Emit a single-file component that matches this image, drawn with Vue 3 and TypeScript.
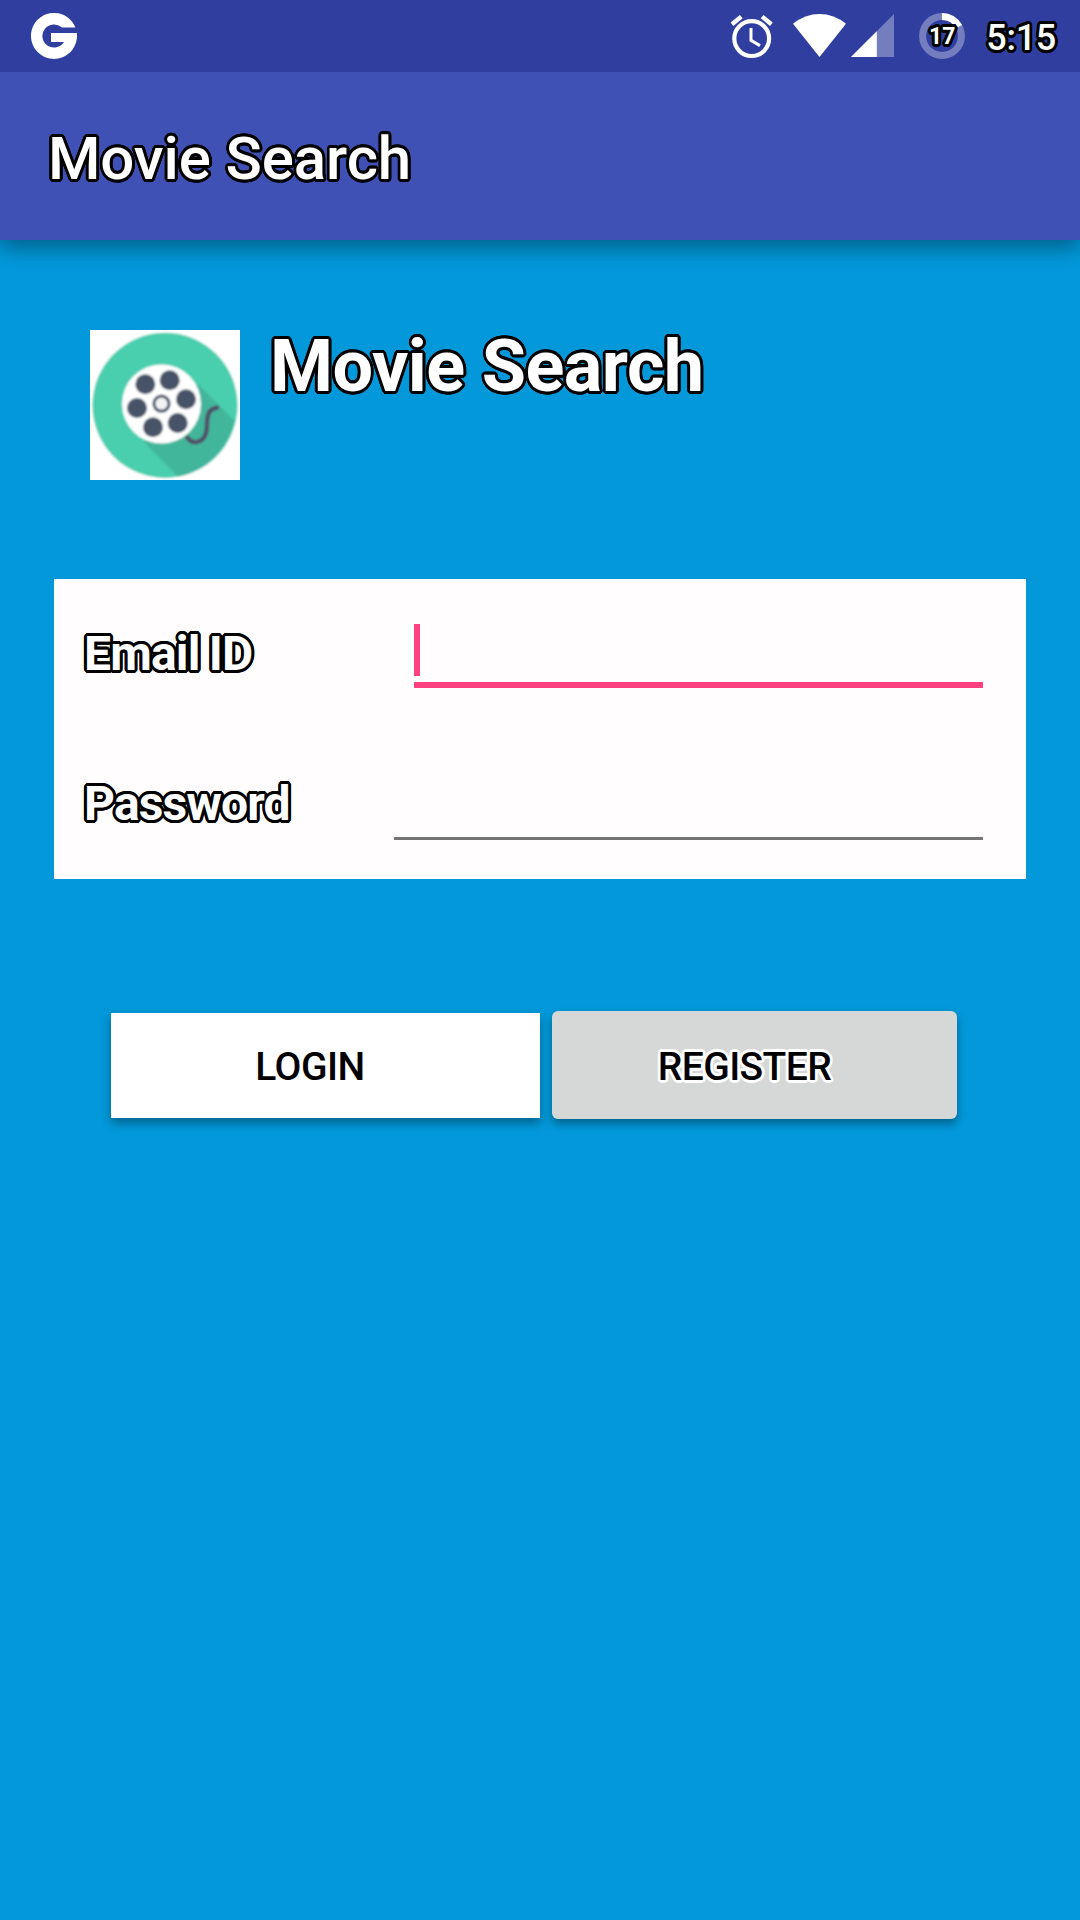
<script setup lang="ts">
import { ref } from 'vue'

interface Field {
  id: string
  label: string
  type: string
  active: boolean
}

const appName = 'Movie Search'
const battery = 17
const clock = '5:15'

const fields = ref<Field[]>([
  { id: 'email', label: 'Email ID', type: 'text', active: true },
  { id: 'password', label: 'Password', type: 'password', active: false },
])

const holes: [number, number][] = [
  [55.3, 54.3],
  [79.7, 50.3],
  [96, 69.3],
  [87.7, 93],
  [63, 97.3],
  [47, 78],
]
</script>

<template>
  <div class="screen">
    <header class="status">
      <svg class="google" width="46" height="46" viewBox="31 13 46 46">
        <path d="M75.4 27.5A23 23 0 1 0 76.8 33H51V42H63.9A11.6 11.6 0 1 1 61.9 27.5Z" fill="#fff" />
      </svg>
      <div class="tray">
        <svg class="alarm" width="44" height="46" viewBox="730 13 44 46">
          <circle cx="751.7" cy="38.6" r="17.4" fill="none" stroke="#fff" stroke-width="4.2" />
          <path d="M732 24.2L741.3 16.6M771.4 24.2L762.1 16.6" stroke="#fff" stroke-width="4.4" fill="none" />
          <path d="M751 28V40.3L760 45.6" fill="none" stroke="#fff" stroke-width="3" />
        </svg>
        <svg class="wifi" width="54" height="46" viewBox="793 13 54 46">
          <path d="M819.5 57L793 23.8Q805 14 819.5 14T846 23.8Z" fill="#fff" />
        </svg>
        <svg class="cell" width="43" height="46" viewBox="851 13 43 46">
          <path d="M894 14V57H851Z" fill="#fff" fill-opacity=".33" />
          <path d="M876.8 31.2V57H851Z" fill="#fff" />
        </svg>
        <div class="battery">
          <svg width="46" height="46" viewBox="0 0 46 46">
            <circle cx="23" cy="23" r="19.4" fill="none" stroke="#fff" stroke-opacity=".33" stroke-width="7" />
            <circle
              cx="23" cy="23" r="19.4" fill="none" stroke="#fff" stroke-width="7"
              pathLength="100" :stroke-dasharray="`${battery} 100`" transform="rotate(-90 23 23)"
            />
          </svg>
          <span class="level outlined">{{ battery }}</span>
        </div>
        <span class="clock outlined">{{ clock }}</span>
      </div>
    </header>

    <div class="appbar">
      <h1 class="title outlined">{{ appName }}</h1>
    </div>

    <main class="content">
      <section class="brand">
        <svg class="logo" width="150" height="150" viewBox="0 0 150 150">
          <defs>
            <filter id="soften" x="0" y="0" width="1" height="1">
              <feGaussianBlur stdDeviation=".8" />
            </filter>
          </defs>
          <rect width="150" height="150" fill="#fff" />
          <g filter="url(#soften)">
            <rect width="150" height="150" fill="#fff" />
            <circle cx="75" cy="75.3" r="72.6" fill="#4acfae" />
            <path d="M108 54L144.5 91A72.6 72.6 0 0 1 88 146.7L54 112Z" fill="#42b69b" />
            <circle cx="71.5" cy="74" r="39.5" fill="#fff" />
            <circle v-for="([x, y], i) in holes" :key="i" :cx="x" :cy="y" r="10" fill="#465266" />
            <circle cx="71.5" cy="73.7" r="7.6" fill="#f2f2f2" stroke="#465266" stroke-width="3" />
            <path
              d="M96.5 106C99 111 103 112.6 107 112C115 110.5 117 102 117 94C117 83 120 78 129 77.5"
              fill="none" stroke="#4f5068" stroke-width="4.4"
            />
          </g>
        </svg>
        <h2 class="name outlined">{{ appName }}</h2>
      </section>

      <form class="card" @submit.prevent>
        <div v-for="field in fields" :key="field.id" class="field">
          <label class="label outlined" :for="field.id">{{ field.label }}</label>
          <div class="entry" :class="{ active: field.active }">
            <span v-if="field.active" class="caret"></span>
            <input :id="field.id" class="input" :type="field.type" />
          </div>
        </div>
      </form>

      <div class="actions">
        <button class="btn login" type="button">LOGIN</button>
        <button class="btn register outlined" type="button">REGISTER</button>
      </div>
    </main>
  </div>
</template>

<style>
body {
  background: #0298d9;
}
</style>

<style scoped>
.screen {
  width: 1080px;
  height: 1920px;
  display: flex;
  flex-direction: column;
  overflow: hidden;
  background: #0298d9;
  font-family: Roboto, sans-serif;
}

h1,
h2 {
  margin: 0;
}

.outlined {
  --o: #000;
  --r: 2.9px;
  --d: calc(var(--r) * 0.707);
  --a: calc(var(--r) * 0.924);
  --b: calc(var(--r) * 0.383);
  color: #fff;
  white-space: nowrap;
  text-shadow:
    var(--r) 0 var(--o),
    var(--a) var(--b) var(--o),
    var(--d) var(--d) var(--o),
    var(--b) var(--a) var(--o),
    0 var(--r) var(--o),
    calc(var(--b) * -1) var(--a) var(--o),
    calc(var(--d) * -1) var(--d) var(--o),
    calc(var(--a) * -1) var(--b) var(--o),
    calc(var(--r) * -1) 0 var(--o),
    calc(var(--a) * -1) calc(var(--b) * -1) var(--o),
    calc(var(--d) * -1) calc(var(--d) * -1) var(--o),
    calc(var(--b) * -1) calc(var(--a) * -1) var(--o),
    0 calc(var(--r) * -1) var(--o),
    var(--b) calc(var(--a) * -1) var(--o),
    var(--d) calc(var(--d) * -1) var(--o),
    var(--a) calc(var(--b) * -1) var(--o);
}

.status {
  position: relative;
  z-index: 1;
  height: 72px;
  flex: none;
  display: flex;
  box-sizing: border-box;
  align-items: center;
  justify-content: space-between;
  padding: 0 24px 0 31px;
  background: #303f9f;
}

.tray {
  display: flex;
  align-items: center;
}

.tray svg,
.google {
  display: block;
  overflow: visible;
}

.wifi {
  margin-left: 19px;
}

.cell {
  margin-left: 4px;
}

.battery {
  position: relative;
  margin-left: 25px;
}

.level {
  position: absolute;
  inset: 0;
  text-align: center;
  font-size: 23px;
  line-height: 48px;
  font-weight: 700;
}

.clock {
  margin-left: 21px;
  font-size: 36px;
  line-height: 46px;
  font-weight: 500;
  letter-spacing: -0.3px;
  padding-top: 3px;
}

.appbar {
  position: relative;
  height: 168px;
  flex: none;
  display: flex;
  align-items: center;
  padding: 5px 48px 0;
  box-sizing: border-box;
  background: #3f51b5;
  box-shadow: 0 8px 20px rgba(0, 0, 0, 0.36);
}

.title {
  font-size: 60px;
  line-height: 70px;
  font-weight: 500;
  letter-spacing: -0.1px;
}

.content {
  display: flex;
  flex-direction: column;
  padding: 90px 54px 0;
}

.brand {
  display: flex;
  align-items: flex-start;
  gap: 30px;
  padding-left: 36px;
}

.logo {
  display: block;
}

.name {
  font-size: 72px;
  line-height: 73px;
  font-weight: 700;
  letter-spacing: -0.6px;
}

.card {
  height: 300px;
  margin-top: 99px;
  padding: 0 43px 0 30px;
  box-sizing: border-box;
  background: #fffdfe;
}

.field {
  height: 150px;
  display: flex;
  justify-content: space-between;
}

.label {
  font-size: 48px;
  line-height: 149px;
  font-weight: 700;
  letter-spacing: -0.8px;
  word-spacing: -2px;
}

.entry {
  width: 589px;
  height: 111px;
  box-sizing: border-box;
  display: flex;
  align-items: flex-end;
  border-bottom: 3px solid #757575;
}

.entry.active {
  width: 569px;
  height: 109px;
  border-bottom: 6px solid #ff4081;
}

.caret {
  width: 6px;
  height: 52px;
  margin-bottom: 6px;
  background: #ff4081;
}

.input {
  flex: 1;
  min-width: 0;
  height: 60px;
  padding: 0;
  border: 0;
  outline: 0;
  background: transparent;
  font: 54px Roboto, sans-serif;
}

.actions {
  display: flex;
  align-items: center;
  gap: 12px;
  margin-top: 132px;
  padding-left: 57px;
}

.btn {
  border: 0;
  font: 500 39px/44px Roboto, sans-serif;
  color: #000;
  box-shadow: 0 5px 9px rgba(0, 0, 0, 0.34);
}

.login {
  width: 429px;
  height: 105px;
  padding: 4px 31px 0 0;
  letter-spacing: -0.5px;
  background: #fff;
}

.register {
  --o: #fff;
  --r: 2.6px;
  color: #000;
  width: 405px;
  height: 108px;
  padding: 4px 20px 0 0;
  border-radius: 6px;
  letter-spacing: -0.6px;
  background: #d6d8d7;
}
</style>
